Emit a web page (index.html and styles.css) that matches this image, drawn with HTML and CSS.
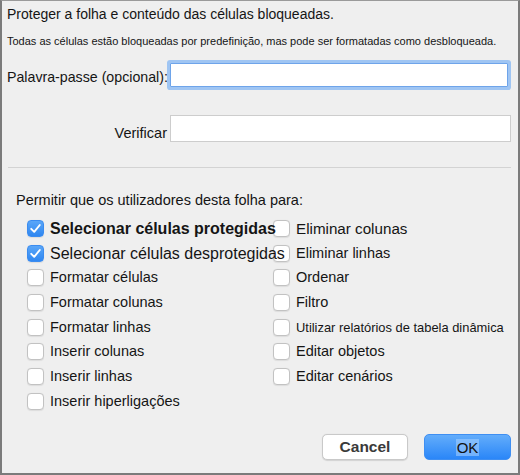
FILE: index.html
```html
<!DOCTYPE html>
<html lang="pt">
<head>
<meta charset="utf-8">
<title>Proteger folha</title>
<link rel="stylesheet" href="styles.css">
</head>
<body>
<div class="dialog">
  <div class="title">Proteger a folha e conteúdo das células bloqueadas.</div>
  <div class="subtitle">Todas as células estão bloqueadas por predefinição, mas pode ser formatadas como desbloqueada.</div>
  <div class="fields">
    <label class="flabel flabel-pw">Palavra-passe (opcional):</label>
    <input class="field field-focus" type="password">
    <label class="flabel flabel-verify">Verificar</label>
    <input class="field field-plain" type="password">
  </div>
  <div class="separator"></div>
  <div class="permit">Permitir que os utilizadores desta folha para:</div>
  <div class="options">
    <div class="col col-left">
      <div class="opt"><span class="box checked"><svg viewBox="0 0 17 17"><path d="M4.2 8.8 L7.2 11.8 L12.8 5" fill="none" stroke="#fff" stroke-width="1.9" stroke-linecap="round" stroke-linejoin="round"/></svg></span><span class="lbl lbl-big lbl-bold">Selecionar células protegidas</span></div>
      <div class="opt"><span class="box checked"><svg viewBox="0 0 17 17"><path d="M4.2 8.8 L7.2 11.8 L12.8 5" fill="none" stroke="#fff" stroke-width="1.9" stroke-linecap="round" stroke-linejoin="round"/></svg></span><span class="lbl lbl-big">Selecionar células desprotegidas</span></div>
      <div class="opt"><span class="box"></span><span class="lbl">Formatar células</span></div>
      <div class="opt"><span class="box"></span><span class="lbl">Formatar colunas</span></div>
      <div class="opt"><span class="box"></span><span class="lbl">Formatar linhas</span></div>
      <div class="opt"><span class="box"></span><span class="lbl">Inserir colunas</span></div>
      <div class="opt"><span class="box"></span><span class="lbl">Inserir linhas</span></div>
      <div class="opt"><span class="box"></span><span class="lbl">Inserir hiperligações</span></div>
    </div>
    <div class="col col-right">
      <div class="opt"><span class="box"></span><span class="lbl lbl-mid">Eliminar colunas</span></div>
      <div class="opt"><span class="box"></span><span class="lbl">Eliminar linhas</span></div>
      <div class="opt"><span class="box"></span><span class="lbl">Ordenar</span></div>
      <div class="opt"><span class="box"></span><span class="lbl">Filtro</span></div>
      <div class="opt"><span class="box"></span><span class="lbl lbl-small">Utilizar relatórios de tabela dinâmica</span></div>
      <div class="opt"><span class="box"></span><span class="lbl">Editar objetos</span></div>
      <div class="opt"><span class="box"></span><span class="lbl">Editar cenários</span></div>
    </div>
  </div>
  <div class="buttons">
    <button class="btn btn-cancel">Cancel</button>
    <button class="btn btn-ok"><span class="sel">OK</span></button>
  </div>
</div>
</body>
</html>
```
FILE: styles.css
```css
html, body {
  margin: 0;
  padding: 0;
  background: #efefef;
}
.dialog {
  width: 520px;
  height: 475px;
  box-sizing: border-box;
  border: 2px solid #7b7b7b;
  border-top: 1px solid #9a9a9a;
  background: #efefef;
  padding: 0 7px 0 5px;
  display: flex;
  flex-direction: column;
  font-family: "Liberation Sans", Arial, sans-serif;
  color: #151515;
}
.title {
  margin-top: 5px;
  font-size: 14px;
  line-height: 16px;
  white-space: nowrap;
}
.subtitle {
  margin-top: 13px;
  font-size: 11px;
  line-height: 13px;
  white-space: nowrap;
}
.fields {
  margin-top: 12px;
  display: grid;
  grid-template-columns: 160px 1fr;
  grid-template-rows: 30px 27px;
  row-gap: 25px;
  column-gap: 3px;
}
.flabel {
  font-size: 14.2px;
  line-height: 16px;
  text-align: right;
  white-space: nowrap;
  align-self: center;
}
.flabel-pw { padding-top: 4px; }
.flabel-verify { padding-top: 9px; font-size: 14.5px; }
.field {
  box-sizing: border-box;
  background: #fff;
  margin: 0;
  padding: 0;
  outline: none;
  font: inherit;
}
.field-focus {
  margin: 3px 3px 3px 0;
  height: 24px;
  border: 1px solid #6ea4ea;
  border-radius: 1px;
  box-shadow: 0 0 0 3px #9fc5f3;
}
.field-plain {
  height: 27px;
  border: 1px solid #cdcdcd;
}
.separator {
  margin: 25px 0 0 1px;
  height: 1px;
  background: #d3d3d3;
}
.permit {
  margin: 24px 0 0 9px;
  font-size: 14.5px;
  line-height: 17px;
  white-space: nowrap;
}
.options {
  margin: 7px 0 0 20px;
  display: grid;
  grid-template-columns: 246px auto;
}
.col-left {
  position: relative;
  z-index: 1;
}
.opt {
  height: 24.7px;
  display: flex;
  align-items: center;
  gap: 6px;
}
.box {
  flex: none;
  width: 17px;
  height: 17px;
  box-sizing: border-box;
  background: #fff;
  border: 1px solid #c2c2c2;
  border-radius: 4px;
  box-shadow: 0 0.5px 1px rgba(0,0,0,0.08);
}
.box svg {
  display: block;
  width: 17px;
  height: 17px;
  margin: -1px;
}
.box.checked {
  background: linear-gradient(#5aa6f8, #2f87f1);
  border-color: #3b8cf0;
}
.lbl {
  font-size: 14.5px;
  line-height: 17px;
  white-space: nowrap;
}
.lbl-big { font-size: 16px; }
.lbl-bold { font-weight: bold; }
.lbl-mid { font-size: 15.2px; }
.lbl-small { font-size: 12.9px; }
.buttons {
  margin-top: auto;
  margin-bottom: 13px;
  display: flex;
  justify-content: flex-end;
  gap: 16px;
}
.btn {
  height: 26px;
  margin: 0;
  padding: 0;
  border-radius: 5px;
  font-family: "Liberation Sans", Arial, sans-serif;
  cursor: default;
}
.btn-cancel {
  width: 86px;
  background: #fff;
  border: 1px solid #c9c9c9;
  box-shadow: 0 0.5px 1px rgba(0,0,0,0.12);
  font-size: 15.5px;
  font-weight: bold;
  color: #3a3a3a;
}
.btn-ok {
  width: 87px;
  background: linear-gradient(#63adfb, #2a86f8);
  border: 1px solid #3f8ff2;
  font-size: 15px;
  color: #111;
}
.sel {
  background: rgba(170, 210, 255, 0.55);
  padding: 0 1px;
}
```
